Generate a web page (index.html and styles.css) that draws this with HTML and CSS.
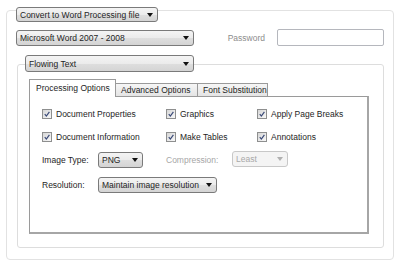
FILE: index.html
```html
<!DOCTYPE html>
<html lang="en">
<head>
  <meta charset="UTF-8">
  <title>Convert to Word Processing file</title>
  <link rel="stylesheet" href="styles.css">
</head>
<body>

  <div class="dialog">
    <div class="select select-head">
      <span class="value">Convert to Word Processing file</span>
      <span class="arrow"></span>
    </div>

    <div class="frame">
      <div class="row">
        <div class="select select-format">
          <span class="value">Microsoft Word 2007 - 2008</span>
          <span class="arrow"></span>
        </div>
        <label class="password-label">Password</label>
        <input class="password" type="password">
      </div>

      <div class="select select-layout">
        <span class="value">Flowing Text</span>
        <span class="arrow"></span>
      </div>

      <div class="group">
        <div class="tabs">
          <div class="tab active">Processing Options</div>
          <div class="tab tab-advanced">Advanced Options</div>
          <div class="tab tab-fonts">Font Substitution</div>
        </div>

        <div class="tab-panel">
          <div class="checks">
            <label class="check"><span class="box"><svg viewBox="0 0 10 10"><path d="M2.2 5.2 L4.2 7.6 L8 2.4"/></svg></span>Document Properties</label>
            <label class="check"><span class="box"><svg viewBox="0 0 10 10"><path d="M2.2 5.2 L4.2 7.6 L8 2.4"/></svg></span>Graphics</label>
            <label class="check"><span class="box"><svg viewBox="0 0 10 10"><path d="M2.2 5.2 L4.2 7.6 L8 2.4"/></svg></span>Apply Page Breaks</label>
            <label class="check"><span class="box"><svg viewBox="0 0 10 10"><path d="M2.2 5.2 L4.2 7.6 L8 2.4"/></svg></span>Document Information</label>
            <label class="check"><span class="box"><svg viewBox="0 0 10 10"><path d="M2.2 5.2 L4.2 7.6 L8 2.4"/></svg></span>Make Tables</label>
            <label class="check"><span class="box"><svg viewBox="0 0 10 10"><path d="M2.2 5.2 L4.2 7.6 L8 2.4"/></svg></span>Annotations</label>
          </div>

          <div class="field-row image-row">
            <span class="field-label">Image Type:</span>
            <div class="select select-png">
              <span class="value">PNG</span>
              <span class="arrow"></span>
            </div>
            <span class="field-label compression-label">Compression:</span>
            <div class="select select-least disabled">
              <span class="value">Least</span>
              <span class="arrow"></span>
            </div>
          </div>

          <div class="field-row resolution-row">
            <span class="field-label">Resolution:</span>
            <div class="select select-resolution">
              <span class="value">Maintain image resolution</span>
              <span class="arrow"></span>
            </div>
          </div>
        </div>
      </div>
    </div>
  </div>

</body>
</html>
```

FILE: styles.css
```css
* { box-sizing: border-box; }

body {
  margin: 0;
  background: #ffffff;
  color: #1e1e1e;
  font-family: 'Liberation Sans', Arial, sans-serif;
  font-size: 8.5px;
}

.dialog {
  padding-top: 7px;
}

/* combo boxes */
.select {
  display: flex;
  align-items: center;
  justify-content: space-between;
  gap: 4px;
  height: 16px;
  padding: 0 4px 0 3px;
  border: 1px solid #7a7a7a;
  border-radius: 3px;
  background: linear-gradient(#f4f4f4 0%, #ebebeb 50%, #dedede 51%, #d4d4d4 100%);
  white-space: nowrap;
}

.select .arrow {
  flex-shrink: 0;
  width: 0;
  height: 0;
  border-left: 3px solid transparent;
  border-right: 3px solid transparent;
  border-top: 4px solid #111;
}

.select.disabled {
  border-color: #c8c8c8;
  background: #f4f4f4;
  color: #a8a8a8;
}

.select.disabled .arrow {
  border-top-color: #b0b0b0;
}

.select-head {
  position: relative;
  z-index: 1;
  width: 142px;
  height: 15px;
  margin-left: 16px;
  margin-bottom: -12px;
}

/* outer frame */
.frame {
  width: 388px;
  margin-left: 6px;
  padding: 18px 9px 11px 9px;
  border: 1px solid #e2e2e2;
  border-radius: 4px;
}

.row {
  display: flex;
  align-items: center;
  height: 17px;
}

.select-format {
  width: 178px;
}

.password-label {
  margin-left: auto;
  margin-right: 12px;
  color: #8c8c8c;
}

.password {
  width: 107px;
  height: 17px;
  margin: 0;
  border: 1px solid #b5b7bd;
  border-radius: 2px;
  background: #fff;
}

.select-layout {
  position: relative;
  z-index: 1;
  width: 169px;
  height: 17px;
  margin: 9px 0 -8px 9px;
}

/* group box under the layout combo */
.group {
  margin-left: 1px;
  padding: 15px 14px 13px 11px;
  border: 1px solid #dddddd;
  border-radius: 3px;
}

.tabs {
  display: flex;
  align-items: flex-end;
  height: 17px;
  margin-bottom: -1px;
}

.tab {
  display: flex;
  align-items: center;
  height: 14px;
  padding-left: 5px;
  border: 1px solid #9a9a9a;
  border-left: none;
  background: linear-gradient(#f6f6f6, #e4e4e4);
  white-space: nowrap;
}

.tab.active {
  position: relative;
  z-index: 1;
  width: 87px;
  height: 18px;
  padding-left: 6px;
  padding-bottom: 1px;
  border-left: 1px solid #9a9a9a;
  border-bottom: none;
  background: #ffffff;
}

.tab-advanced {
  width: 82px;
}

.tab-fonts {
  width: 70px;
}

.tab-panel {
  width: 340px;
  height: 138px;
  padding: 10px 0 0 12px;
  border: 1px solid #9a9a9a;
  border-right: 2px solid #a6a6a6;
  border-bottom: 2px solid #a6a6a6;
  background: #ffffff;
}

.checks {
  display: grid;
  grid-template-columns: 124px 91px auto;
  row-gap: 9px;
}

.check {
  display: flex;
  align-items: center;
  gap: 4px;
  height: 14px;
  white-space: nowrap;
}

.box {
  width: 10px;
  height: 10px;
  border: 1px solid #8e8f8f;
  background: linear-gradient(135deg, #d6d6d6, #f8f8f8);
}

.box svg {
  display: block;
  width: 8px;
  height: 8px;
  fill: none;
  stroke: #3a4a78;
  stroke-width: 1.5;
}

.field-row {
  display: flex;
  align-items: center;
  height: 16px;
}

.image-row {
  margin-top: 8px;
}

.resolution-row {
  margin-top: 9px;
}

.field-label {
  width: 56px;
}

.select-png {
  width: 45px;
}

.compression-label {
  width: 66px;
  margin-left: 23px;
  color: #a6a6a6;
}

.select-least {
  width: 56px;
  margin-top: -2px;
}

.select-resolution {
  width: 119px;
}
```
